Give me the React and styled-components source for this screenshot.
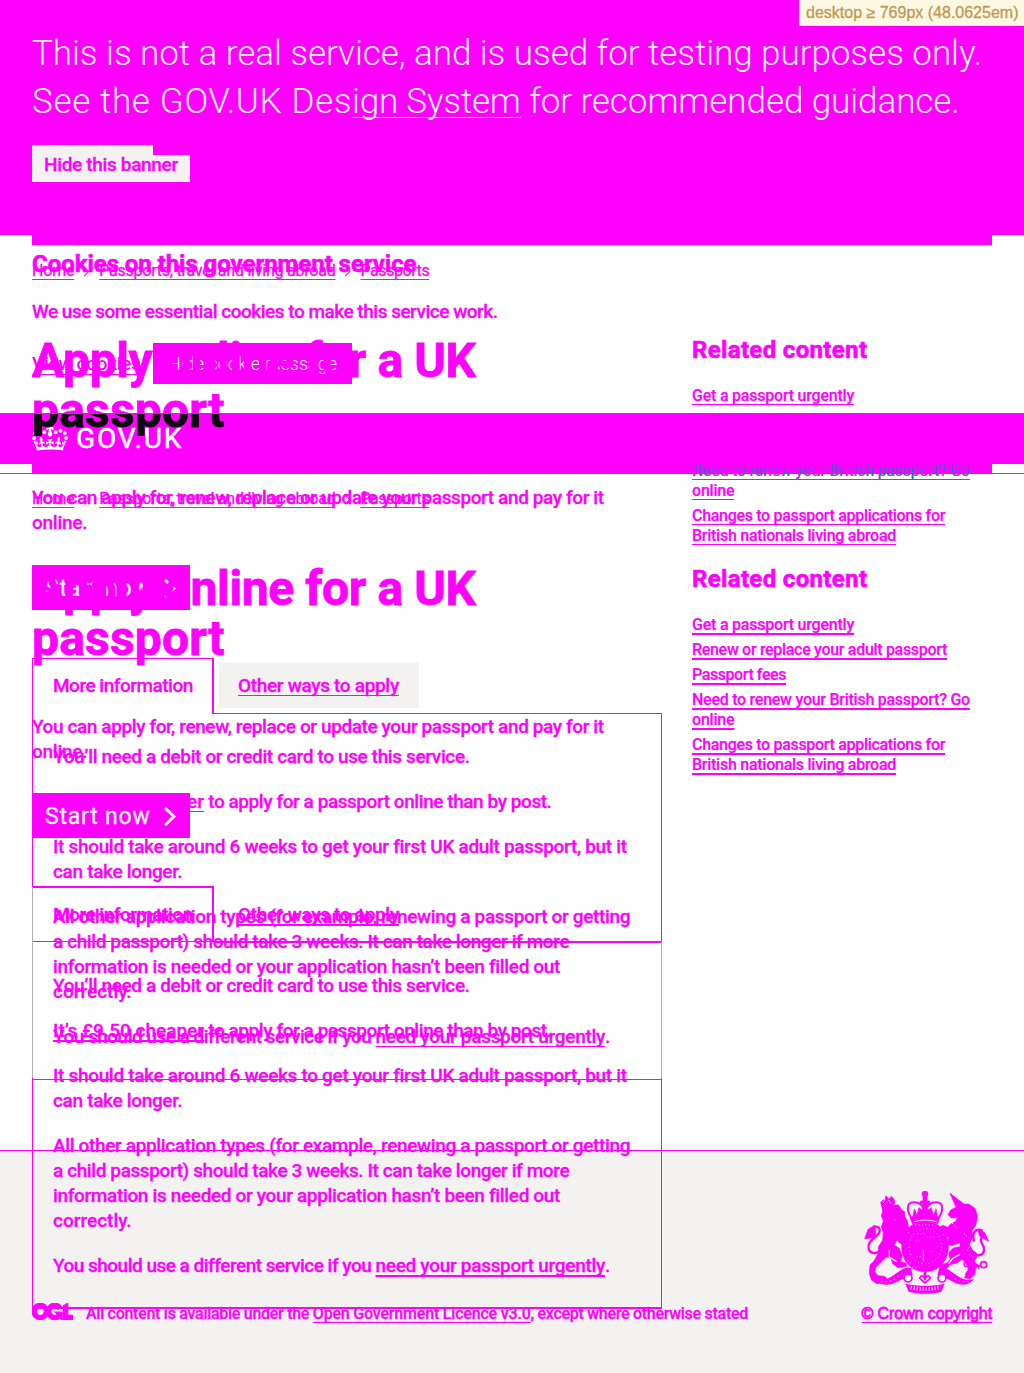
import React from 'react';
import styled, { createGlobalStyle, css } from 'styled-components';

const M = '#ff00ff';
const GREY = '#f3f2f1';
const EDGE = '#b1b4b6';

const Global = createGlobalStyle`
  * { box-sizing: border-box; }
  body { margin: 0; background: #fff; color: ${M}; font-family: Roboto, "Liberation Sans", sans-serif; }
  h1, h2, p, ul { margin: 0; padding: 0; }
  ul { list-style: none; }
`;

const Page = styled.div`
  position: relative;
  width: 1024px;
  height: 1373px;
  overflow: hidden;
`;
const Line = styled.span`
  display: block;
  white-space: nowrap;
  letter-spacing: ${(p) => p.$ls || 0}px;
`;
const Run = styled.span`
  letter-spacing: ${(p) => p.$ls || 0}px;
`;
const Link = styled.a`
  text-decoration: underline;
  text-decoration-thickness: ${(p) => p.$thick || 1}px;
  text-underline-offset: ${(p) => p.$offset || 3}px;
  text-decoration-skip-ink: none;
  ${(p) =>
    p.$ls !== undefined &&
    css`
      letter-spacing: ${p.$ls}px;
    `}
`;
const Spacer = styled.div`
  height: ${(p) => p.$h}px;
`;

const Banner = styled.header`
  height: 235px;
  padding: 30px 32px 0;
  background: ${M};
`;
const BannerText = styled.p`
  color: ${GREY};
  font-size: 35px;
  line-height: 48px;
  font-weight: 300;
`;
const HideButton = styled.button`
  display: block;
  width: 158px;
  height: 37px;
  margin-top: 19px;
  padding: 2px 0 0 12px;
  border: 0;
  background: ${GREY};
  clip-path: polygon(0 0, 121px 0, 121px 10px, 100% 10px, 100% 100%, 0 100%);
  color: ${M};
  font: 500 19px/25px Roboto, sans-serif;
  letter-spacing: -0.33px;
  text-align: left;
  white-space: nowrap;
  -webkit-text-stroke: 0.3px;
`;
const Tag = styled.div`
  position: absolute;
  top: 0;
  right: 0;
  width: 225px;
  height: 26px;
  padding-left: 6px;
  background: #fcf8e3;
  border-left: 1px solid #fbeed5;
  border-bottom: 1px solid #fbeed5;
  color: #c09853;
  font: 16px/25px "Liberation Sans", Arial, sans-serif;
  white-space: nowrap;
  -webkit-text-stroke: 0.3px;
`;
const Container = styled.div`
  width: 960px;
  margin: 0 auto;
`;
const Strip = styled.div`
  height: ${(p) => p.$h || 10}px;
  background: ${M};
`;
const Crumbs = styled.nav`
  display: flex;
  align-items: center;
  height: 20px;
  margin-top: ${(p) => p.$top}px;
  font-size: 16px;
  line-height: 20px;
  white-space: nowrap;
  -webkit-text-stroke: 0.3px;
`;
const Chevron = styled.i`
  width: 7px;
  height: 7px;
  margin: 1px 11px 0 7px;
  border: solid ${M};
  border-width: 1px 1px 0 0;
  transform: rotate(45deg);
`;
const Columns = styled.div`
  display: grid;
  grid-template-columns: 630px 300px;
  column-gap: 30px;
`;
const Title = styled.h1`
  position: relative;
  z-index: 3;
  font-size: 48px;
  line-height: 50px;
  font-weight: 700;
  -webkit-text-stroke: 0.8px;
  ${(p) =>
    p.$split &&
    css`
      color: transparent;
      background: linear-gradient(${M} 78px, #0b0c0c 78px);
      background-clip: text;
    `}
`;
const Lead = styled.p`
  margin-top: ${(p) => p.$top}px;
  font-size: 19px;
  line-height: 25px;
  font-weight: 500;
  -webkit-text-stroke: 0.3px;
`;
const StartButton = styled.button`
  position: relative;
  z-index: ${(p) => p.$z};
  display: flex;
  align-items: center;
  gap: 12px;
  width: 158px;
  height: 45px;
  padding: 1px 0 0 13px;
  border: 0;
  background: ${M};
  color: ${GREY};
  font: 400 23px/25px Roboto, sans-serif;
  letter-spacing: 0.8px;
  white-space: nowrap;
  -webkit-text-stroke: 0.3px;
`;
const Tabs = styled.div`
  display: flex;
  align-items: flex-start;
  height: 55px;
  font-size: 19px;
  line-height: 25px;
  font-weight: 500;
  white-space: nowrap;
  -webkit-text-stroke: 0.3px;
`;
const ActiveTab = styled.div`
  width: 182px;
  height: 56px;
  padding: 14px 0 0 20px;
  border: 1px solid ${M};
  border-width: ${(p) => p.$bt || 1}px 2px 0 1px;
  border-left-color: ${(p) => p.$left || M};
  letter-spacing: -0.5px;
`;
const Tab = styled.div`
  width: 200px;
  height: 45px;
  margin: 5px 0 0 5px;
  padding: ${(p) => (p.$plain ? 11 : 10)}px 0 0 19px;
  background: ${(p) => (p.$plain ? 'none' : GREY)};
  letter-spacing: -0.32px;
`;
const Panel = styled.section`
  display: flex;
  flex-direction: column;
  gap: 20px;
  height: ${(p) => p.$h}px;
  padding: 31px 0 0 20px;
  border: 1px solid ${M};
  border-width: ${(p) => p.$bw};
  border-image: ${(p) => p.$edge} 1;
  font-size: 19px;
  line-height: 25px;
  font-weight: 500;
  -webkit-text-stroke: 0.3px;
`;
const TopRule = styled.div`
  width: 448px;
  height: ${(p) => p.$h}px;
  margin: 0 0 -${(p) => p.$h}px auto;
  background: ${M};
`;
const Aside = styled.aside`
  position: relative;
  z-index: 3;
  padding-top: ${(p) => p.$top}px;
  font-size: 16px;
  line-height: 20px;
  font-weight: 500;
  -webkit-text-stroke: 0.2px;
`;
const AsideTitle = styled.h2`
  margin-bottom: 21px;
  font-size: 24px;
  line-height: 30px;
  font-weight: 700;
  -webkit-text-stroke: 0.6px;
`;
const AsideList = styled.ul`
  display: flex;
  flex-direction: column;
  gap: 5px;
`;
const Gap = styled.li`
  height: 45px;
`;
const Striped = styled.span`
  color: transparent;
  background: repeating-linear-gradient(90deg, #1d70b8 0 1px, ${M} 1px 4px);
  background-clip: text;
  a { text-decoration-color: ${M}; }
`;
const Footer = styled.footer`
  height: 223px;
  margin-top: 70px;
  border-top: 1px solid ${M};
  background: ${GREY};
`;
const FooterRow = styled(Container)`
  display: flex;
  justify-content: space-between;
  align-items: flex-end;
  height: 173px;
  font-size: 16px;
  line-height: 20px;
  font-weight: 500;
  white-space: nowrap;
  -webkit-text-stroke: 0.3px;
`;
const Licence = styled.div`
  display: flex;
  align-items: flex-end;
  gap: 13px;
  svg { margin-bottom: 4px; }
`;
const Copyright = styled.div`
  display: flex;
  flex-direction: column;
  align-items: flex-end;
  gap: 10px;
  font-family: "Liberation Sans", Arial, sans-serif;
  font-size: 16px;
  font-weight: 400;
  letter-spacing: -0.08px;
  -webkit-text-stroke: 0.8px;
  svg { margin-right: 3px; }
`;

const Shifted = styled.div`
  position: absolute;
  top: 245px;
  left: 0;
  width: 1024px;
`;
const CookieTitle = styled.h2`
  padding-top: 4px;
  font-size: 24px;
  line-height: 30px;
  font-weight: 700;
  -webkit-text-stroke: 0.6px;
`;
const CookieText = styled.p`
  margin-top: 20px;
  font-size: 19px;
  line-height: 25px;
  font-weight: 500;
  -webkit-text-stroke: 0.3px;
`;
const CookieActions = styled.div`
  display: flex;
  align-items: center;
  height: 41px;
  margin-top: 19px;
  font-size: 19px;
  line-height: 25px;
  white-space: nowrap;
`;
const CookieLink = styled.div`
  width: 121px;
  font-weight: 500;
  letter-spacing: -0.3px;
`;
const CookieButton = styled.button`
  width: 199px;
  height: 41px;
  padding: 0;
  border: 0;
  background: ${M};
  color: #fff;
  font: 300 18px/25px Roboto, sans-serif;
`;
const Bar = styled.div`
  height: 51px;
  margin-top: 29px;
  background: ${M};
`;
const Brand = styled(Container)`
  display: flex;
  align-items: center;
  gap: 8px;
  height: 51px;
  color: #fff;
  font-size: 28px;
  font-weight: 400;
  -webkit-text-stroke: 0.5px;
  svg { margin-top: -3px; }
`;
const Edge = styled.div`
  border-bottom: 1px solid ${M};
`;

const Crown = () => (
  <svg width="36" height="27" viewBox="0 0 132 97" fill="#fff">
    <path d="M25 30.2c3.5 1.5 7.7-.2 9.1-3.7 1.5-3.6-.2-7.8-3.9-9.2-3.6-1.4-7.6.3-9.1 3.9-1.4 3.5.3 7.5 3.9 9zM9 39.5c3.6 1.5 7.8-.2 9.2-3.7 1.5-3.6-.2-7.8-3.9-9.1-3.6-1.5-7.6.2-9.1 3.8-1.4 3.5.3 7.5 3.8 9zM4.4 57.2c3.5 1.5 7.7-.2 9.1-3.8 1.5-3.6-.2-7.7-3.9-9.1-3.5-1.5-7.6.3-9.1 3.8-1.4 3.5.3 7.6 3.9 9.1zm38.3-21.4c3.5 1.5 7.7-.2 9.1-3.8 1.5-3.6-.2-7.7-3.9-9.1-3.6-1.5-7.6.3-9.1 3.8-1.3 3.6.4 7.7 3.9 9.1zm64.4-5.6c-3.6 1.5-7.8-.2-9.1-3.7-1.5-3.6.2-7.8 3.8-9.2 3.6-1.4 7.7.3 9.2 3.9 1.3 3.5-.4 7.5-3.9 9zm15.9 9.3c-3.6 1.5-7.7-.2-9.1-3.7-1.5-3.6.2-7.8 3.7-9.1 3.6-1.5 7.7.2 9.2 3.8 1.5 3.5-.3 7.5-3.8 9zm4.7 17.7c-3.6 1.5-7.8-.2-9.2-3.8-1.5-3.6.2-7.7 3.9-9.1 3.6-1.5 7.7.3 9.2 3.8 1.3 3.5-.4 7.6-3.9 9.1zM89.3 35.8c-3.6 1.5-7.8-.2-9.2-3.8-1.4-3.6.2-7.7 3.9-9.1 3.6-1.5 7.7.3 9.2 3.8 1.4 3.6-.3 7.7-3.9 9.1zM69.7 17.7l8.9 4.7V9.3l-8.9 2.8c-.2-.3-.5-.6-.9-.9L72.4 0H59.6l3.5 11.2c-.3.3-.6.5-.9.9l-8.8-2.8v13.1l8.8-4.7c.3.3.6.7.9.9l-5 15.4v.1c-.2.8-.4 1.6-.4 2.4 0 4.1 3.1 7.5 7 8.1h.2c.3 0 .7.1 1 .1.4 0 .7 0 1-.1h.2c4-.6 7.1-4.1 7.1-8.1 0-.8-.1-1.7-.4-2.4V34l-5.1-15.4c.4-.2.7-.6 1-.9zM66 92.8c16.9 0 32.8 1.1 47.1 3.2 4-16.9 8.9-26.7 14-33.5l-9.6-3.4c1 4.9 1.1 7.2 0 10.2-1.5-1.4-3-4.3-4.2-8.7L108.6 76c2.8-2 5-3.2 7.5-3.3-4.4 9.4-10 11.9-13.6 11.2-4.3-.8-6.3-4.6-5.6-7.9 1-4.7 5.7-5.9 8-.5 4.3-8.7-3-11.4-7.6-8.8 7.1-7.2 7.9-13.5 2.1-21.1-8 6.1-8.1 12.3-4.5 20.8-4.7-5.4-12.1-2.5-9.5 6.2 3.4-5.2 7.9-2 7.2 3.1-.6 4.3-6.4 7.8-13.5 7.2-10.3-.9-10.9-8-11.2-13.8 2.5-.5 7.1 1.8 11 7.3L80.2 60c-4.1 4.4-8 5.3-12.3 5.4 1.4-4.4 8-11.6 8-11.6H55.5s6.4 7.2 7.9 11.6c-4.2-.1-8-1-12.3-5.4l1.4 16.4c3.9-5.5 8.5-7.7 10.9-7.3-.3 5.8-.9 12.8-11.1 13.8-7.2.6-12.9-2.9-13.5-7.2-.7-5 3.8-8.3 7.1-3.1 2.7-8.7-4.6-11.6-9.4-6.2 3.7-8.5 3.6-14.7-4.6-20.8-5.8 7.6-5 13.9 2.2 21.1-4.7-2.6-11.9.1-7.7 8.8 2.3-5.5 7.1-4.2 8.1.5.7 3.3-1.3 7.1-5.7 7.9-3.5.7-9-1.8-13.5-11.2 2.5.1 4.7 1.3 7.5 3.3l-4.7-15.4c-1.2 4.4-2.7 7.2-4.3 8.7-1.1-3-.9-5.3 0-10.2l-9.5 3.4c5 6.9 9.9 16.7 14 33.5 14.8-2.1 30.8-3.2 47.7-3.2z" />
  </svg>
);

const OglLogo = () => (
  <svg width="41" height="17" viewBox="0 0 483.2 195.7" fill={M} stroke={M} strokeWidth="14">
    <path d="M421.5 142.8V.1l-50.7 32.3v161.1h112.4v-50.7zm-122.3-9.6A47.12 47.12 0 0 1 221 97.8c0-26 21.1-47.1 47.1-47.1 16.7 0 31.4 8.7 39.7 21.8l42.7-27.2A97.63 97.63 0 0 0 268.1 0c-36.5 0-68.3 20.1-85.1 49.7A98 98 0 0 0 97.8 0C43.9 0 0 43.9 0 97.8s43.9 97.8 97.8 97.8c36.5 0 68.3-20.1 85.1-49.7a97.76 97.76 0 0 0 149.6 25.4l19.4 22.2h3v-87.8h-80l24.3 27.5zM97.8 145c-26 0-47.1-21.1-47.1-47.1s21.1-47.1 47.1-47.1 47.1 21.1 47.1 47.1S123.8 145 97.8 145" />
  </svg>
);

const Arms = () => (
  <svg width="125" height="103" viewBox="72 62 375 309">
    <g fill={M} stroke={M} strokeWidth="2">
      <circle cx="255" cy="71" r="9" />
      <path d="M249 80h12v12h8v8h-8l3 20 10-8 6 24 8-20 4 20 6 8-5 16q-38-14-76 0l-6-16 8-8 4-20 8 18 6-22 10 8 2-20h-8v-8h8z" />
      <path d="M255 153c45 0 70 35 70 77 0 40-28 74-70 74s-70-34-70-74c0-42 25-77 70-77z" />
      <path d="M122 96l8-8 4 6 4-18 8 10 8-8 8 8 2 12-4 6 16 0 8 14 10 6 0 14 8 14 4 22-2 20 16 8-6 22-22 0-14-6-6-10-10 16 16 10 8 22-4 18 16 4 2 10-26 4-16-12-6-20-14 0-14 14-16 16-4 14 10 12 20 2 8 8-8 12-24 2-16-12-6-18 2-26 12-12 12-22 2-22 12-18 2-24-6-16 6-18-6-16 4-14z" />
      <path d="M330 69l42 32 14 0 20 14 6 22-4 26-12 18 2 20-10 20 8 16 10 10 4 14-8 12 12 12-8 12-2 16-14 12-16-2 4-16 8-10-8-18-12-12-14 10-22 6-14 16-18-2 4-12 20-8 8-10-4-20 14-14 20-4 0-12-22 8-14-2 2-20-18-20-10 2-2-12 12-8 16 6 8-10 16-8 4-12-18 2-10-10 8-14 16-8z" />
      <path d="M74 205l10-28 20-12 4 28-12 10z" />
      <path d="M446 213l-12-26-20-10 4 20 14 8z" />
    </g>
    <g fill="none" stroke={M} strokeWidth="7">
      <path d="M219 150c-20-24-22-54 2-54 16 0 28 6 32 26M291 150c20-24 22-54-2-54-16 0-28 6-32 26" strokeWidth="6" />
      <path d="M100 170c26-6 22 18 8 28-16 12-26 22-22 38 6 16 26 16 36 2" />
      <path d="M402 214c-8-30 8-42 26-32M426 200c-12 16 10 24 6 40-2 16-22 20-28 6" />
      <circle cx="379" cy="282" r="7" strokeWidth="4" />
      <circle cx="392" cy="296" r="7" strokeWidth="4" />
      <circle cx="431" cy="283" r="9" strokeWidth="5" />
      <path d="M402 292l10-8 10 4M418 296l-6-12" strokeWidth="4" />
    </g>
    <path d="M108 326c24 8 44-4 62-18 14-10 26-18 42-16l6 22c-14 2-22 8-38 16-20 12-50 24-72-4zM402 326c-24 8-44-4-62-18-14-10-26-18-42-16l-6 22c14 2 22 8 38 16 20 12 50 24 72-4zM196 340c40 8 78 8 118 0l-10 24c-34 8-62 8-98 0z" fill={M} />
    <g fill={GREY} stroke={M} strokeWidth="5">
      <circle cx="204" cy="323" r="12" />
      <circle cx="306" cy="323" r="12" />
      <path d="M255 338l-16-14q4-14 16-2 12-12 16 2z" />
    </g>
    <path d="M255 292v38" stroke={M} strokeWidth="8" />
    <g stroke={GREY} fill="none">
      <ellipse cx="256" cy="228" rx="49" ry="53" strokeWidth="2.500" strokeDasharray="4 7 3 8" />
      <path d="M250 238v34" strokeWidth="3" />
      <path d="M232 190h26M262 200h22M226 212h16M268 244h18M230 258h12" strokeWidth="2.500" strokeDasharray="3 6" />
      <path d="M200 176l8 14M204 270l14 14M304 182l8 14M226 164h54M216 292h30" strokeWidth="2.500" strokeDasharray="3 7" />
      <path d="M128 94l10 10M146 90l8 10M158 142l10 10M336 158l18 18M372 190l14 12M392 224l-12 20M386 252l16 8" strokeWidth="3" strokeDasharray="4 4" />
      <path d="M124 334q30 4 56-20M386 334q-30 4-56-20" strokeWidth="3" strokeDasharray="4 9" />
      <path d="M212 352q44 8 88 0" strokeWidth="11" strokeDasharray="3 6" />
      <path d="M222 154q34-10 68 0" strokeWidth="3" />
      <path d="M148 238l0 22 22 14M360 252l-22 12-12 16" strokeWidth="4" />
    </g>
  </svg>
);

const Breadcrumbs = ({ top }) => (
  <Crumbs $top={top}>
    <Link $ls={-0.2}>Home</Link>
    <Chevron />
    <Link $ls={-0.23}>Passports, travel and living abroad</Link>
    <Chevron />
    <Link $ls={-0.43}>Passports</Link>
  </Crumbs>
);

const Heading = ({ split }) => (
  <Title $split={split}>
    <Line $ls={-0.4}>Apply online for a UK</Line>
    <Line $ls={0.2}>passport</Line>
  </Title>
);

const Intro = ({ top }) => (
  <Lead $top={top}>
    <Line $ls={-0.4}>You can apply for, renew, replace or update your passport and pay for it</Line>
    <Line $ls={-0.25}>online.</Line>
  </Lead>
);

const Start = ({ z }) => (
  <StartButton $z={z}>
    Start now
    <svg width="15" height="19" viewBox="0 0 15 19" fill="none" stroke={GREY} strokeWidth="3">
      <path d="M2 1l9 8.500-9 8.500" />
    </svg>
  </StartButton>
);

const Details = ({ thick }) => (
  <>
    <p><Line $ls={-0.37}>You’ll need a debit or credit card to use this service.</Line></p>
    <p>
      <Line $ls={-0.44}>
        <Link $ls={0} $thick={thick}>It’s £9.50 cheaper</Link> to apply for a passport online than by post.
      </Line>
    </p>
    <p>
      <Line $ls={-0.32}>It should take around 6 weeks to get your first UK adult passport, but it</Line>
      <Line $ls={-0.33}>can take longer.</Line>
    </p>
    <p>
      <Line $ls={-0.35}>All other application types (for example, renewing a passport or getting</Line>
      <Line $ls={-0.4}>a child passport) should take 3 weeks. It can take longer if more</Line>
      <Line $ls={-0.35}>information is needed or your application hasn’t been filled out</Line>
      <Line>correctly.</Line>
    </p>
    <p>
      <Line $ls={-0.51}>
        You should use a different service if you <Link $ls={-0.3} $thick={thick}>need your passport urgently</Link>.
      </Line>
    </p>
  </>
);

export default function App() {
  return (
    <Page>
      <Global />
      <Banner>
        <BannerText>
          <Line $ls={-0.04}>This is not a real service, and is used for testing purposes only.</Line>
          <Line $ls={0.65}>
            See the GOV.UK Des<Link $ls={-0.2} $offset={4}>ign System</Link>
            <Run $ls={-0.07}> for recommended guidance.</Run>
          </Line>
        </BannerText>
        <HideButton>Hide this banner</HideButton>
      </Banner>
      <Tag>desktop ≥ 769px (48.0625em)</Tag>
      <Container>
        <Strip />
        <Breadcrumbs top={16} />
        <Columns>
          <main>
            <Spacer $h={55} />
            <Heading split />
            <Intro top={49} />
            <Spacer $h={30} />
            <Start z={1} />
            <Spacer $h={48} />
            <Tabs>
              <ActiveTab>More information</ActiveTab>
              <Tab><Link>Other ways to apply</Link></Tab>
            </Tabs>
            <TopRule $h={1} />
            <Panel $h={367} $bw="0 1px 1px" $edge={`linear-gradient(${M} 228px, ${EDGE} 228px 365px, ${M} 365px)`}>
              <Details />
            </Panel>
          </main>
          <Aside $top={54}>
            <AsideTitle><Line $ls={0.34}>Related content</Line></AsideTitle>
            <AsideList>
              <li><Link $ls={-0.22}>Get a passport urgently</Link></li>
              <Gap />
              <li>
                <Line $ls={-0.26}><Striped><Link>Need to renew your British passport? Go</Link></Striped></Line>
                <Line $ls={-0.2}><Link>online</Link></Line>
              </li>
              <li>
                <Line $ls={-0.31}><Link>Changes to passport applications for</Link></Line>
                <Line $ls={-0.26}><Link>British nationals living abroad</Link></Line>
              </li>
            </AsideList>
          </Aside>
        </Columns>
      </Container>
      <Footer>
        <FooterRow>
          <Licence>
            <OglLogo />
            <Run $ls={-0.28}>
              All content is available under the <Link $ls={-0.19}>Open Government Licence v3.0</Link>, except where
              otherwise stated
            </Run>
          </Licence>
          <Copyright>
            <Arms />
            <Link>© Crown copyright</Link>
          </Copyright>
        </FooterRow>
      </Footer>

      <Shifted>
        <Container>
          <CookieTitle><Line $ls={-0.05}>Cookies on this government service</Line></CookieTitle>
          <CookieText><Line $ls={-0.49}>We use some essential cookies to make this service work.</Line></CookieText>
          <CookieActions>
            <CookieLink><Link $offset={4}>View cookies</Link></CookieLink>
            <CookieButton>Hide cookie message</CookieButton>
          </CookieActions>
        </Container>
        <Bar>
          <Brand>
            <Crown />
            <Run $ls={1.9}>GOV.UK</Run>
          </Brand>
        </Bar>
        <Edge>
          <Container><Strip $h={9} /></Container>
        </Edge>
        <Container>
          <Breadcrumbs top={15} />
          <Columns>
            <div>
              <Spacer $h={55} />
              <Heading />
              <Intro top={50} />
              <Spacer $h={29} />
              <Start z={3} />
              <Spacer $h={48} />
              <Tabs>
                <ActiveTab $bt={2} $left={EDGE}>More information</ActiveTab>
                <Tab $plain><Link $thick={2}>Other ways to apply</Link></Tab>
              </Tabs>
              <TopRule $h={2} />
              <Panel $h={368} $bw="1px 1px 2px" $edge={`linear-gradient(${M} 1px, ${EDGE} 1px 137px, ${M} 137px)`}>
                <Details thick={2} />
              </Panel>
            </div>
            <Aside $top={55}>
              <AsideTitle><Line $ls={0.34}>Related content</Line></AsideTitle>
              <AsideList>
                <li><Link $ls={-0.22} $thick={2}>Get a passport urgently</Link></li>
                <li><Link $ls={-0.31} $thick={2}>Renew or replace your adult passport</Link></li>
                <li><Link $ls={-0.42} $thick={2}>Passport fees</Link></li>
                <li>
                  <Line $ls={-0.26}><Link $thick={2}>Need to renew your British passport? Go</Link></Line>
                  <Line $ls={-0.2}><Link $thick={2}>online</Link></Line>
                </li>
                <li>
                  <Line $ls={-0.31}><Link $thick={2}>Changes to passport applications for</Link></Line>
                  <Line $ls={-0.26}><Link $thick={2}>British nationals living abroad</Link></Line>
                </li>
              </AsideList>
            </Aside>
          </Columns>
        </Container>
      </Shifted>
    </Page>
  );
}
